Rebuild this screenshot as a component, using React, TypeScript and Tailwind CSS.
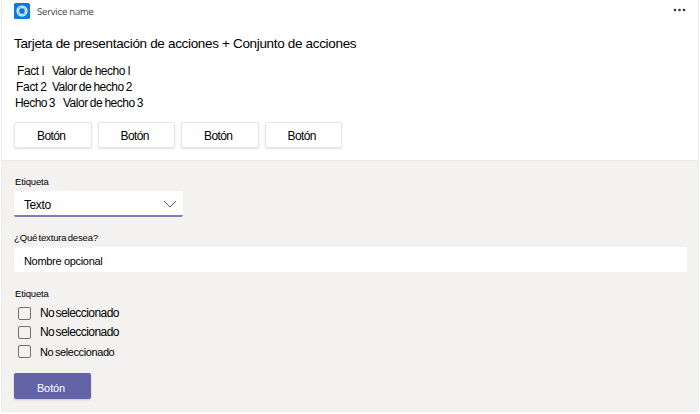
import React from 'react';

const facts = [
  { name: 'Fact l', value: 'Valor de hecho l', row: 'pl-[3px]', nameCls: 'w-[35px] tracking-[-0.4px]', valueCls: 'tracking-[-0.5px]' },
  { name: 'Fact 2', value: 'Valor de hecho 2', row: 'pl-[2px]', nameCls: 'w-[36px] tracking-[-0.3px] [word-spacing:-1px]', valueCls: 'tracking-[-0.5px] [word-spacing:-0.6px]' },
  { name: 'Hecho 3', value: 'Valor de hecho 3', row: 'pl-px', nameCls: 'w-12 tracking-[-0.55px] [word-spacing:-1px]', valueCls: 'tracking-[-0.5px] [word-spacing:-0.6px]' },
];

const options = [
  { label: 'No seleccionado', cls: 'text-[12px] tracking-[-0.55px] [word-spacing:-1.5px] pb-px' },
  { label: 'No seleccionado', cls: 'text-[12px] tracking-[-0.55px] [word-spacing:-1.5px] pb-px' },
  { label: 'No seleccionado', cls: 'text-[11px] tracking-[-0.4px] [word-spacing:-1px]' },
];

function ServiceLogo() {
  return (
    <svg width="16" height="16" viewBox="0 0 16 16" fill="none" className="shrink-0">
      <rect width="16" height="16" rx="1.6" fill="#0c7bdb" />
      <circle cx="8" cy="8" r="5" stroke="#fff" strokeWidth="1.1" />
      <circle cx="8" cy="8" r="3.4" stroke="#c4e0f8" strokeWidth="1.1" />
      <path d="M4.1 5.6 4.9 9.4M6.6 3.4l3.8 1.2M11.9 6l-.8 4.1M9.7 12.4l-4-1.3" stroke="#fff" strokeWidth="0.7" />
    </svg>
  );
}

function ActionButton() {
  return (
    <button className="flex h-[26px] w-[77.5px] justify-center rounded-[2px] border border-[#e6e6e6] bg-white pr-[3px] pt-[5px] text-[12px] leading-4 tracking-[-0.6px] shadow-[0_1px_2px_rgba(0,0,0,0.12)]">
      Botón
    </button>
  );
}

export default function App() {
  return (
    <div className="h-[414px] w-[700px] bg-white pl-px font-['Liberation_Sans',Arial,sans-serif] text-black">
      <div className="h-[412px] w-[698px] overflow-hidden rounded-b-[3px] border-x border-b border-[#eeedec]">
        <section className="h-[160px] bg-white pl-3 pr-3 pt-[3px]">
          <header className="flex h-4 items-center">
            <ServiceLogo />
            <span className="ml-[7px] pt-px font-['Open_Sans','Noto_Sans',sans-serif] text-[9.5px] leading-4 tracking-[-0.2px] text-[#444]">
              Service name
            </span>
            <svg width="13" height="4" viewBox="0 0 13 4" className="mb-[3px] ml-auto" fill="#333">
              <circle cx="2" cy="2" r="1.3" />
              <circle cx="6.5" cy="2" r="1.3" />
              <circle cx="11" cy="2" r="1.3" />
            </svg>
          </header>
          <h1 className="mt-[17px] whitespace-nowrap text-[13.5px] font-normal leading-4 tracking-[-0.33px]">
            Tarjeta de presentación de acciones + Conjunto de acciones
          </h1>
          <dl className="mt-[11px] text-[12px] leading-4">
            {facts.map((f) => (
              <div key={f.name} className={`flex whitespace-nowrap ${f.row}`}>
                <dt className={f.nameCls}>{f.name}</dt>
                <dd className={f.valueCls}>{f.value}</dd>
              </div>
            ))}
          </dl>
          <div className="mt-[11px] flex gap-[6px]">
            {[0, 1, 2, 3].map((i) => (
              <ActionButton key={i} />
            ))}
          </div>
        </section>
        <section className="h-[252px] border-t border-[#eae9e8] bg-[#f3f2f1] pl-3 pr-[11px] pt-[14px]">
          <div className="pl-px text-[9.5px] leading-[14px] tracking-[-0.15px]">Etiqueta</div>
          <div className="mt-[2px] flex h-[26px] w-[169px] justify-between rounded-[2px] border-b-2 border-b-[#7b7db6] bg-white pl-[10px] pr-[6px] pt-[6px] text-[12px] leading-4 tracking-[-0.4px]">
            <span>Texto</span>
            <svg width="14" height="8" viewBox="0 0 14 8" fill="none" stroke="#555" className="mt-[3px]">
              <path d="M1 1l6 6 6-6" />
            </svg>
          </div>
          <div className="mt-[14px] text-[9.5px] leading-[14px] tracking-[-0.15px] [word-spacing:-1.2px]">¿Qué textura desea?</div>
          <div className="mt-[2px] h-[25px] rounded-[2px] bg-white pl-[10px] pt-[6px] text-[11px] leading-4 tracking-[-0.32px]">Nombre opcional</div>
          <div className="mt-[15px] pl-px text-[9.5px] leading-[14px] tracking-[-0.15px]">Etiqueta</div>
          <div className="mt-[3px]">
            {options.map((o, i) => (
              <label key={i} className="flex h-[19px] items-center pl-1">
                <span className="h-[13px] w-[13px] rounded-[2px] border border-[#707070]" />
                <span className={`ml-[9px] leading-4 ${o.cls}`}>{o.label}</span>
              </label>
            ))}
          </div>
          <button className="mt-[12px] flex h-[26px] w-[77px] justify-center rounded-[2px] bg-[#6264a7] pr-[3px] pt-[7px] text-[11px] leading-4 tracking-[-0.1px] text-white shadow-[0_1px_2px_rgba(0,0,0,0.18)]">
            Botón
          </button>
        </section>
      </div>
    </div>
  );
}
